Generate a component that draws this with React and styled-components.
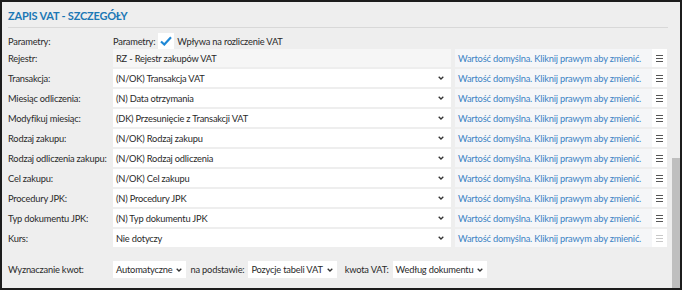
import React from 'react';
import styled, { createGlobalStyle } from 'styled-components';

const GlobalStyle = createGlobalStyle`
  body {
    margin: 0;
    font-family: Lato, "Noto Sans", sans-serif;
  }
`;

const Frame = styled.div`
  position: relative;
  width: 682px;
  height: 290px;
  box-sizing: border-box;
  border: 2px solid #1c1c1c;
  background: #eeeeee;
  overflow: hidden;
  font-size: 9.3px;
  letter-spacing: -0.2px;
  color: #2a2a2a;
`;

const Content = styled.div`
  padding: 6px 12px 0 6px;
`;

const Title = styled.div`
  font-family: Lato, sans-serif;
  font-weight: 700;
  font-size: 11px;
  color: #1c78b5;
  line-height: 16px;
  padding-bottom: 3px;
  border-bottom: 1px solid #d8d8d8;
  margin-bottom: 5px;
`;

const Rows = styled.div`
  display: flex;
  flex-direction: column;
  gap: 2px;
`;

const Row = styled.div`
  display: flex;
  align-items: center;
  height: ${p => p.$h || 18}px;
`;

const Label = styled.div`
  width: 105px;
  flex: none;
  white-space: nowrap;
`;

const Field = styled.div`
  width: 338px;
  height: 18px;
  box-sizing: border-box;
  flex: none;
  display: flex;
  align-items: center;
  justify-content: space-between;
  padding: 0 7px 0 3px;
  background: ${p => (p.$readonly ? '#f6f6f6' : '#ffffff')};
  white-space: nowrap;
`;

const Chevron = () => (
  <svg width="6" height="4" viewBox="0 0 6 4">
    <path d="M0.7 0.7 L3 3 L5.3 0.7" fill="none" stroke="#333" strokeWidth="1.3" />
  </svg>
);

const Hint = styled.div`
  margin-left: 4px;
  width: 197px;
  height: 18px;
  box-sizing: border-box;
  flex: none;
  display: flex;
  align-items: center;
  padding-left: 3px;
  background: #f5f6f8;
  color: #3b82c4;
  white-space: nowrap;
`;

const MenuBtn = styled.div`
  width: 15px;
  height: 18px;
  flex: none;
  display: flex;
  align-items: center;
  justify-content: center;
  background: #ffffff;
`;

const Burger = ({ faded }) => (
  <svg width="7" height="7" viewBox="0 0 7 7">
    {[0.5, 3.5, 6.5].map(y => (
      <line key={y} x1="0" x2="7" y1={y} y2={y} stroke={faded ? '#c8c8c8' : '#555'} strokeWidth="1" />
    ))}
  </svg>
);

const Check = styled.div`
  display: flex;
  align-items: center;
  gap: 3px;
`;

const CheckBox = styled.div`
  width: 16px;
  height: 16px;
  display: flex;
  align-items: center;
  justify-content: center;
  background: #fff;
`;

const Bottom = styled.div`
  display: flex;
  align-items: center;
  margin-top: 14px;
  height: 17px;
`;

const SmallSelect = styled.div`
  height: 17px;
  box-sizing: border-box;
  display: flex;
  align-items: center;
  gap: 4px;
  padding: 0 4px 0 3px;
  background: #fff;
  white-space: nowrap;
`;

const Inline = styled.span`
  margin: 0 4px 0 ${p => p.$left || 4}px;
  white-space: nowrap;
`;

const Scrollbar = styled.div`
  position: absolute;
  right: 0;
  top: 156px;
  width: 8px;
  height: 132px;
  background: #bfbfbf;
`;

const rows = [
  ['Rejestr:', 'RZ - Rejestr zakupów VAT', true],
  ['Transakcja:', '(N/OK) Transakcja VAT'],
  ['Miesiąc odliczenia:', '(N) Data otrzymania'],
  ['Modyfikuj miesiąc:', '(DK) Przesunięcie z Transakcji VAT'],
  ['Rodzaj zakupu:', '(N/OK) Rodzaj zakupu'],
  ['Rodzaj odliczenia zakupu:', '(N/OK) Rodzaj odliczenia'],
  ['Cel zakupu:', '(N/OK) Cel zakupu'],
  ['Procedury JPK:', '(N) Procedury JPK'],
  ['Typ dokumentu JPK:', '(N) Typ dokumentu JPK'],
  ['Kurs:', 'Nie dotyczy', false, true],
];

export default function App() {
  return (
    <>
      <GlobalStyle />
      <Frame>
        <Content>
          <Title>ZAPIS VAT - SZCZEGÓŁY</Title>
          <Row $h={16}>
            <Label>Parametry:</Label>
            <Check>
              <span>Parametry:</span>
              <CheckBox>
                <svg width="12" height="10" viewBox="0 0 12 10">
                  <path d="M1 5.5 L4.3 8.5 L11 1.2" fill="none" stroke="#1e88d6" strokeWidth="2.2" />
                </svg>
              </CheckBox>
              <span>Wpływa na rozliczenie VAT</span>
            </Check>
          </Row>
          <Rows>
            {rows.map(([label, value, readonly, faded]) => (
              <Row key={label}>
                <Label>{label}</Label>
                <Field $readonly={readonly}>
                  <span>{value}</span>
                  {!readonly && <Chevron />}
                </Field>
                <Hint>Wartość domyślna. Kliknij prawym aby zmienić.</Hint>
                <MenuBtn>
                  <Burger faded={faded} />
                </MenuBtn>
              </Row>
            ))}
          </Rows>
          <Bottom>
            <Label>Wyznaczanie kwot:</Label>
            <SmallSelect>
              Automatyczne <Chevron />
            </SmallSelect>
            <Inline>na podstawie:</Inline>
            <SmallSelect>
              Pozycje tabeli VAT <Chevron />
            </SmallSelect>
            <Inline $left={8}>kwota VAT:</Inline>
            <SmallSelect>
              Według dokumentu <Chevron />
            </SmallSelect>
          </Bottom>
        </Content>
        <Scrollbar />
      </Frame>
    </>
  );
}
